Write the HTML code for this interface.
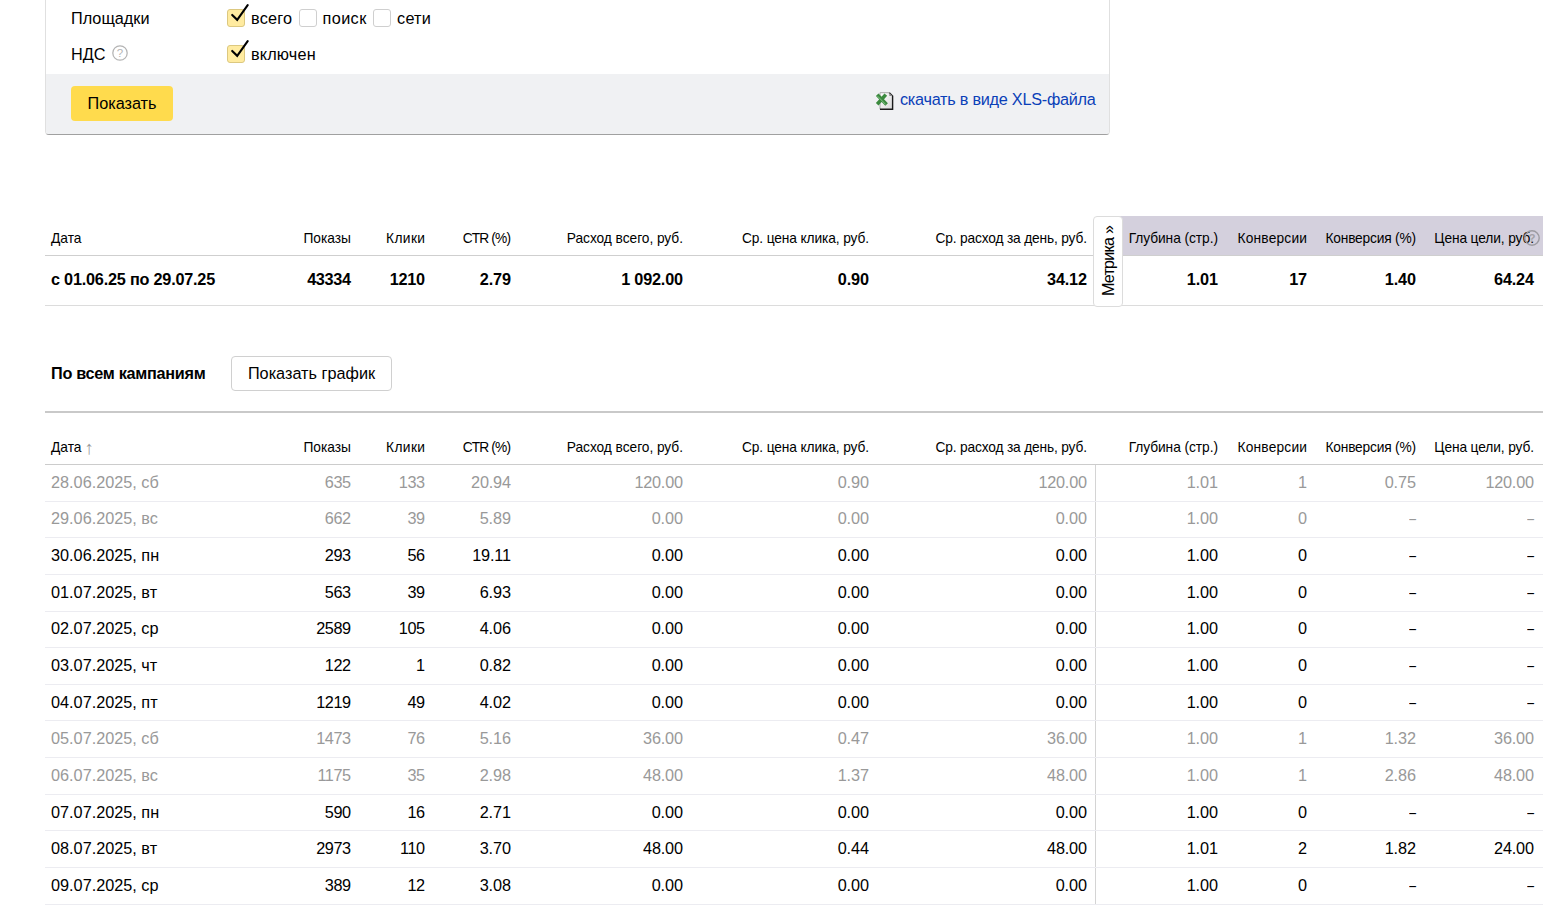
<!DOCTYPE html>
<html lang="ru"><head><meta charset="utf-8"><title>Статистика</title>
<style>
*{box-sizing:border-box;margin:0;padding:0}
html,body{width:1568px;height:905px;overflow:hidden;background:#fff}
body{font-family:"Liberation Sans",sans-serif;color:#000;position:relative;font-size:16.25px}
.abs{position:absolute}
.panel{position:absolute;left:45px;top:-10px;width:1065px;height:145px;background:#fff;border:1px solid #e0e0e0;border-bottom-color:#a0a0a0;border-radius:0 0 4px 4px}
.pfoot{position:absolute;left:0;right:0;top:83px;bottom:0;background:#f0f1f3;border-radius:0 0 3px 3px}
.lbl{position:absolute;white-space:nowrap;font-size:16.25px;line-height:20px}
.cb{position:absolute;width:18px;height:18px;border-radius:3px;border:1px solid #cfcfcf;background:#fff}
.cb.on{background:#ffeba0;border-color:#dcc880}
.btn{position:absolute;left:71px;top:86px;width:102px;height:35px;background:#ffdb4d;border-radius:4px;text-align:center;line-height:35px;font-size:16.25px}
.btn2{position:absolute;left:231px;top:356px;width:161px;height:35px;background:#fff;border:1px solid #d0d0d0;border-radius:4px;text-align:center;line-height:33px;font-size:16.25px}
.link{position:absolute;color:#0a40b8;white-space:nowrap;font-size:16.25px;line-height:20px}
.row{position:absolute;left:45px;width:1498px}
.c{position:absolute;white-space:nowrap;top:0}
.h{font-size:13.75px;line-height:18px}
.b{font-size:16.25px;line-height:20px}

.bold{font-weight:bold}
.d{display:inline-block;transform:scaleX(.75);transform-origin:100% 50%}
.gray{color:#999}
.hl{position:absolute;left:45px;width:1498px;height:1px}
.q{position:absolute;width:16px;height:16px;border:1px solid #b0b0b0;border-radius:50%;color:#b0b0b0;font-size:12px;line-height:14px;text-align:center}
</style></head><body>

<div class="panel"><div class="pfoot"></div></div>
<div class="lbl" style="left:71px;top:8px">Площадки</div>
<div class="lbl" style="left:71px;top:44px">НДС</div>
<svg class="abs" style="left:111px;top:44px" width="18" height="18" viewBox="0 0 18 18"><circle cx="9" cy="9" r="7.2" fill="none" stroke="#b4b4b4" stroke-width="1.25"/><text x="9" y="13.2" text-anchor="middle" font-family="Liberation Sans, sans-serif" font-size="11.5" fill="#b4b4b4">?</text></svg>
<div class="cb on" style="left:227px;top:9px"></div><svg class="abs" style="left:227px;top:3px" width="24" height="24" viewBox="0 0 24 24"><path d="M5.2 11.9 L10.2 16.8 L20.7 2.2" fill="none" stroke="#000" stroke-width="2.1" stroke-linecap="round" stroke-linejoin="miter"/></svg>
<div class="lbl" style="left:251px;top:8px;letter-spacing:0.2px">всего</div>
<div class="cb" style="left:299px;top:9px"></div>
<div class="lbl" style="left:322.5px;top:8px;letter-spacing:0.4px">поиск</div>
<div class="cb" style="left:373px;top:9px"></div>
<div class="lbl" style="left:397px;top:8px;letter-spacing:0.25px">сети</div>
<div class="cb on" style="left:227px;top:45px"></div><svg class="abs" style="left:227px;top:39px" width="24" height="24" viewBox="0 0 24 24"><path d="M5.2 11.9 L10.2 16.8 L20.7 2.2" fill="none" stroke="#000" stroke-width="2.1" stroke-linecap="round" stroke-linejoin="miter"/></svg>
<div class="lbl" style="left:251px;top:44px;letter-spacing:0.15px">включен</div>
<div class="btn">Показать</div>
<svg class="abs" style="left:875px;top:91px" width="20" height="20" viewBox="0 0 20 20">
<defs><linearGradient id="pg" x1="0" y1="0" x2="1" y2="1"><stop offset="0" stop-color="#ffffff"/><stop offset="1" stop-color="#d8d8d8"/></linearGradient></defs>
<path d="M5 1.7H14.3L17.6 5V18.2H5Z" fill="url(#pg)"/>
<path d="M5 18.2V1.7H14.3" fill="none" stroke="#a8a8a8" stroke-width="1"/>
<path d="M14.3 1.7L17.6 5V18.2H5" fill="none" stroke="#1a1a1a" stroke-width="1.4" stroke-linejoin="miter"/>
<path d="M14.3 1.7V5H17.6Z" fill="#8a8a8a"/>
<path d="M2.2 3.8L11.6 13.6M10.8 3.6L2.2 13.2" stroke="#3b8a3e" stroke-width="3.6" stroke-linecap="butt"/>
<path d="M2.6 5.2L10.6 13.4" stroke="#8cc98e" stroke-width="0.9"/>
</svg>
<div class="link" style="left:900px;top:89px;letter-spacing:-0.26px">скачать в виде XLS-файла</div>
<div class="abs" style="left:1113px;top:216px;width:430px;height:39px;background:#d4d0dd"></div>
<div class="hl" style="top:255px;background:#cfcfcf"></div>
<div class="hl" style="top:305px;background:#dcdcdc"></div>
<div class="row" style="top:230px;left:0;width:1568px"><span class="c h" style="left:51px">Дата</span><span class="c h" style="right:1217px">Показы</span><span class="c h" style="right:1143px;letter-spacing:0.4px;margin-right:-0.4px">Клики</span><span class="c h" style="right:1057px;letter-spacing:-0.85px;margin-right:0.85px">CTR (%)</span><span class="c h" style="right:885px;letter-spacing:-0.05px;margin-right:0.05px">Расход всего, руб.</span><span class="c h" style="right:699px;letter-spacing:-0.12px;margin-right:0.12px">Ср. цена клика, руб.</span><span class="c h" style="right:481px;letter-spacing:-0.17px;margin-right:0.17px">Ср. расход за день, руб.</span><span class="c h" style="right:350px;letter-spacing:-0.06px;margin-right:0.06px">Глубина (стр.)</span><span class="c h" style="right:261px;letter-spacing:0.2px;margin-right:-0.2px">Конверсии</span><span class="c h" style="right:152px;letter-spacing:-0.2px;margin-right:0.2px">Конверсия (%)</span><span class="c h" style="right:34px;letter-spacing:-0.12px;margin-right:0.12px">Цена цели, руб.</span></div>
<div class="row" style="top:269px;left:0;width:1568px"><span class="c b bold" style="left:51px;letter-spacing:-0.22px">с 01.06.25 по 29.07.25</span><span class="c b n bold" style="right:1217px;letter-spacing:-0.33px;margin-right:0.33px">43334</span><span class="c b n bold" style="right:1143px;letter-spacing:-0.33px;margin-right:0.33px">1210</span><span class="c b n bold" style="right:1057px;letter-spacing:-0.15px;margin-right:0.15px">2.79</span><span class="c b n bold" style="right:885px;letter-spacing:-0.20px;margin-right:0.20px">1 092.00</span><span class="c b n bold" style="right:699px;letter-spacing:-0.15px;margin-right:0.15px">0.90</span><span class="c b n bold" style="right:481px;letter-spacing:-0.18px;margin-right:0.18px">34.12</span><span class="c b n bold" style="right:350px;letter-spacing:-0.15px;margin-right:0.15px">1.01</span><span class="c b n bold" style="right:261px;letter-spacing:-0.33px;margin-right:0.33px">17</span><span class="c b n bold" style="right:152px;letter-spacing:-0.15px;margin-right:0.15px">1.40</span><span class="c b n bold" style="right:34px;letter-spacing:-0.18px;margin-right:0.18px">64.24</span></div>
<svg class="abs" style="left:1523.2px;top:229px" width="18" height="18" viewBox="0 0 18 18"><circle cx="9" cy="9" r="7.2" fill="none" stroke="#9c9ba1" stroke-width="1.4"/><text x="9" y="13.2" text-anchor="middle" font-family="Liberation Sans, sans-serif" font-size="11.5" font-weight="bold" fill="#a3a2a8">?</text></svg>
<div class="abs" style="left:1093px;top:216px;width:30px;height:91px;background:#fff;border:1px solid #dcdcdc;border-radius:4px"></div>
<div class="abs" style="left:1108px;top:261px;width:0;height:0"><div class="abs" style="white-space:nowrap;font-size:16.25px;line-height:20px;transform:translate(-50%,-50%) rotate(-90deg);transform-origin:50% 50%;left:0;top:0;letter-spacing:-0.85px">Метрика&nbsp;»</div></div>
<div class="lbl bold" style="left:51px;top:363px;letter-spacing:-0.3px">По всем кампаниям</div>
<div class="btn2">Показать график</div>
<div class="hl" style="top:411px;height:2px;background:#c9c9c9"></div>
<div class="row" style="top:439px;left:0;width:1568px"><span class="c h" style="left:51px">Дата<span style="color:#999;font-size:18.5px;line-height:0;position:relative;top:1.5px;margin-left:3px">↑</span></span><span class="c h" style="right:1217px">Показы</span><span class="c h" style="right:1143px;letter-spacing:0.4px;margin-right:-0.4px">Клики</span><span class="c h" style="right:1057px;letter-spacing:-0.85px;margin-right:0.85px">CTR (%)</span><span class="c h" style="right:885px;letter-spacing:-0.05px;margin-right:0.05px">Расход всего, руб.</span><span class="c h" style="right:699px;letter-spacing:-0.12px;margin-right:0.12px">Ср. цена клика, руб.</span><span class="c h" style="right:481px;letter-spacing:-0.17px;margin-right:0.17px">Ср. расход за день, руб.</span><span class="c h" style="right:350px;letter-spacing:-0.06px;margin-right:0.06px">Глубина (стр.)</span><span class="c h" style="right:261px;letter-spacing:0.2px;margin-right:-0.2px">Конверсии</span><span class="c h" style="right:152px;letter-spacing:-0.2px;margin-right:0.2px">Конверсия (%)</span><span class="c h" style="right:34px;letter-spacing:-0.12px;margin-right:0.12px">Цена цели, руб.</span></div>
<div class="hl" style="top:464px;background:#cccccc"></div>
<div class="abs" style="left:1095px;top:465px;width:1px;height:440px;background:#d4d4d4"></div>
<div class="row" style="top:471.70px;left:0;width:1568px"><span class="c b gray" style="left:51px">28.06.2025, сб</span><span class="c b n gray" style="right:1217px;letter-spacing:-0.47px;margin-right:0.47px">635</span><span class="c b n gray" style="right:1143px;letter-spacing:-0.47px;margin-right:0.47px">133</span><span class="c b n gray" style="right:1057px;letter-spacing:-0.18px;margin-right:0.18px">20.94</span><span class="c b n gray" style="right:885px;letter-spacing:-0.22px;margin-right:0.22px">120.00</span><span class="c b n gray" style="right:699px;letter-spacing:-0.10px;margin-right:0.10px">0.90</span><span class="c b n gray" style="right:481px;letter-spacing:-0.22px;margin-right:0.22px">120.00</span><span class="c b n gray" style="right:350px;letter-spacing:-0.10px;margin-right:0.10px">1.01</span><span class="c b n gray" style="right:261px;letter-spacing:-0.47px;margin-right:0.47px">1</span><span class="c b n gray" style="right:152px;letter-spacing:-0.10px;margin-right:0.10px">0.75</span><span class="c b n gray" style="right:34px;letter-spacing:-0.22px;margin-right:0.22px">120.00</span></div>
<div class="hl" style="top:501px;background:#ececf1"></div>
<div class="row" style="top:508.37px;left:0;width:1568px"><span class="c b gray" style="left:51px">29.06.2025, вс</span><span class="c b n gray" style="right:1217px;letter-spacing:-0.47px;margin-right:0.47px">662</span><span class="c b n gray" style="right:1143px;letter-spacing:-0.47px;margin-right:0.47px">39</span><span class="c b n gray" style="right:1057px;letter-spacing:-0.10px;margin-right:0.10px">5.89</span><span class="c b n gray" style="right:885px;letter-spacing:-0.10px;margin-right:0.10px">0.00</span><span class="c b n gray" style="right:699px;letter-spacing:-0.10px;margin-right:0.10px">0.00</span><span class="c b n gray" style="right:481px;letter-spacing:-0.10px;margin-right:0.10px">0.00</span><span class="c b n gray" style="right:350px;letter-spacing:-0.10px;margin-right:0.10px">1.00</span><span class="c b n gray" style="right:261px;letter-spacing:-0.47px;margin-right:0.47px">0</span><span class="c b n gray" style="right:152px"><span class="d">–</span></span><span class="c b n gray" style="right:34px"><span class="d">–</span></span></div>
<div class="hl" style="top:537px;background:#ececf1"></div>
<div class="row" style="top:545.04px;left:0;width:1568px"><span class="c b" style="left:51px">30.06.2025, пн</span><span class="c b n" style="right:1217px;letter-spacing:-0.47px;margin-right:0.47px">293</span><span class="c b n" style="right:1143px;letter-spacing:-0.47px;margin-right:0.47px">56</span><span class="c b n" style="right:1057px;letter-spacing:-0.18px;margin-right:0.18px">19.11</span><span class="c b n" style="right:885px;letter-spacing:-0.10px;margin-right:0.10px">0.00</span><span class="c b n" style="right:699px;letter-spacing:-0.10px;margin-right:0.10px">0.00</span><span class="c b n" style="right:481px;letter-spacing:-0.10px;margin-right:0.10px">0.00</span><span class="c b n" style="right:350px;letter-spacing:-0.10px;margin-right:0.10px">1.00</span><span class="c b n" style="right:261px;letter-spacing:-0.47px;margin-right:0.47px">0</span><span class="c b n" style="right:152px"><span class="d">–</span></span><span class="c b n" style="right:34px"><span class="d">–</span></span></div>
<div class="hl" style="top:574px;background:#ececf1"></div>
<div class="row" style="top:581.71px;left:0;width:1568px"><span class="c b" style="left:51px">01.07.2025, вт</span><span class="c b n" style="right:1217px;letter-spacing:-0.47px;margin-right:0.47px">563</span><span class="c b n" style="right:1143px;letter-spacing:-0.47px;margin-right:0.47px">39</span><span class="c b n" style="right:1057px;letter-spacing:-0.10px;margin-right:0.10px">6.93</span><span class="c b n" style="right:885px;letter-spacing:-0.10px;margin-right:0.10px">0.00</span><span class="c b n" style="right:699px;letter-spacing:-0.10px;margin-right:0.10px">0.00</span><span class="c b n" style="right:481px;letter-spacing:-0.10px;margin-right:0.10px">0.00</span><span class="c b n" style="right:350px;letter-spacing:-0.10px;margin-right:0.10px">1.00</span><span class="c b n" style="right:261px;letter-spacing:-0.47px;margin-right:0.47px">0</span><span class="c b n" style="right:152px"><span class="d">–</span></span><span class="c b n" style="right:34px"><span class="d">–</span></span></div>
<div class="hl" style="top:611px;background:#ececf1"></div>
<div class="row" style="top:618.38px;left:0;width:1568px"><span class="c b" style="left:51px">02.07.2025, ср</span><span class="c b n" style="right:1217px;letter-spacing:-0.47px;margin-right:0.47px">2589</span><span class="c b n" style="right:1143px;letter-spacing:-0.47px;margin-right:0.47px">105</span><span class="c b n" style="right:1057px;letter-spacing:-0.10px;margin-right:0.10px">4.06</span><span class="c b n" style="right:885px;letter-spacing:-0.10px;margin-right:0.10px">0.00</span><span class="c b n" style="right:699px;letter-spacing:-0.10px;margin-right:0.10px">0.00</span><span class="c b n" style="right:481px;letter-spacing:-0.10px;margin-right:0.10px">0.00</span><span class="c b n" style="right:350px;letter-spacing:-0.10px;margin-right:0.10px">1.00</span><span class="c b n" style="right:261px;letter-spacing:-0.47px;margin-right:0.47px">0</span><span class="c b n" style="right:152px"><span class="d">–</span></span><span class="c b n" style="right:34px"><span class="d">–</span></span></div>
<div class="hl" style="top:647px;background:#ececf1"></div>
<div class="row" style="top:655.05px;left:0;width:1568px"><span class="c b" style="left:51px">03.07.2025, чт</span><span class="c b n" style="right:1217px;letter-spacing:-0.47px;margin-right:0.47px">122</span><span class="c b n" style="right:1143px;letter-spacing:-0.47px;margin-right:0.47px">1</span><span class="c b n" style="right:1057px;letter-spacing:-0.10px;margin-right:0.10px">0.82</span><span class="c b n" style="right:885px;letter-spacing:-0.10px;margin-right:0.10px">0.00</span><span class="c b n" style="right:699px;letter-spacing:-0.10px;margin-right:0.10px">0.00</span><span class="c b n" style="right:481px;letter-spacing:-0.10px;margin-right:0.10px">0.00</span><span class="c b n" style="right:350px;letter-spacing:-0.10px;margin-right:0.10px">1.00</span><span class="c b n" style="right:261px;letter-spacing:-0.47px;margin-right:0.47px">0</span><span class="c b n" style="right:152px"><span class="d">–</span></span><span class="c b n" style="right:34px"><span class="d">–</span></span></div>
<div class="hl" style="top:684px;background:#ececf1"></div>
<div class="row" style="top:691.72px;left:0;width:1568px"><span class="c b" style="left:51px">04.07.2025, пт</span><span class="c b n" style="right:1217px;letter-spacing:-0.47px;margin-right:0.47px">1219</span><span class="c b n" style="right:1143px;letter-spacing:-0.47px;margin-right:0.47px">49</span><span class="c b n" style="right:1057px;letter-spacing:-0.10px;margin-right:0.10px">4.02</span><span class="c b n" style="right:885px;letter-spacing:-0.10px;margin-right:0.10px">0.00</span><span class="c b n" style="right:699px;letter-spacing:-0.10px;margin-right:0.10px">0.00</span><span class="c b n" style="right:481px;letter-spacing:-0.10px;margin-right:0.10px">0.00</span><span class="c b n" style="right:350px;letter-spacing:-0.10px;margin-right:0.10px">1.00</span><span class="c b n" style="right:261px;letter-spacing:-0.47px;margin-right:0.47px">0</span><span class="c b n" style="right:152px"><span class="d">–</span></span><span class="c b n" style="right:34px"><span class="d">–</span></span></div>
<div class="hl" style="top:720px;background:#ececf1"></div>
<div class="row" style="top:728.39px;left:0;width:1568px"><span class="c b gray" style="left:51px">05.07.2025, сб</span><span class="c b n gray" style="right:1217px;letter-spacing:-0.47px;margin-right:0.47px">1473</span><span class="c b n gray" style="right:1143px;letter-spacing:-0.47px;margin-right:0.47px">76</span><span class="c b n gray" style="right:1057px;letter-spacing:-0.10px;margin-right:0.10px">5.16</span><span class="c b n gray" style="right:885px;letter-spacing:-0.18px;margin-right:0.18px">36.00</span><span class="c b n gray" style="right:699px;letter-spacing:-0.10px;margin-right:0.10px">0.47</span><span class="c b n gray" style="right:481px;letter-spacing:-0.18px;margin-right:0.18px">36.00</span><span class="c b n gray" style="right:350px;letter-spacing:-0.10px;margin-right:0.10px">1.00</span><span class="c b n gray" style="right:261px;letter-spacing:-0.47px;margin-right:0.47px">1</span><span class="c b n gray" style="right:152px;letter-spacing:-0.10px;margin-right:0.10px">1.32</span><span class="c b n gray" style="right:34px;letter-spacing:-0.18px;margin-right:0.18px">36.00</span></div>
<div class="hl" style="top:757px;background:#ececf1"></div>
<div class="row" style="top:765.06px;left:0;width:1568px"><span class="c b gray" style="left:51px">06.07.2025, вс</span><span class="c b n gray" style="right:1217px;letter-spacing:-0.47px;margin-right:0.47px">1175</span><span class="c b n gray" style="right:1143px;letter-spacing:-0.47px;margin-right:0.47px">35</span><span class="c b n gray" style="right:1057px;letter-spacing:-0.10px;margin-right:0.10px">2.98</span><span class="c b n gray" style="right:885px;letter-spacing:-0.18px;margin-right:0.18px">48.00</span><span class="c b n gray" style="right:699px;letter-spacing:-0.10px;margin-right:0.10px">1.37</span><span class="c b n gray" style="right:481px;letter-spacing:-0.18px;margin-right:0.18px">48.00</span><span class="c b n gray" style="right:350px;letter-spacing:-0.10px;margin-right:0.10px">1.00</span><span class="c b n gray" style="right:261px;letter-spacing:-0.47px;margin-right:0.47px">1</span><span class="c b n gray" style="right:152px;letter-spacing:-0.10px;margin-right:0.10px">2.86</span><span class="c b n gray" style="right:34px;letter-spacing:-0.18px;margin-right:0.18px">48.00</span></div>
<div class="hl" style="top:794px;background:#ececf1"></div>
<div class="row" style="top:801.73px;left:0;width:1568px"><span class="c b" style="left:51px">07.07.2025, пн</span><span class="c b n" style="right:1217px;letter-spacing:-0.47px;margin-right:0.47px">590</span><span class="c b n" style="right:1143px;letter-spacing:-0.47px;margin-right:0.47px">16</span><span class="c b n" style="right:1057px;letter-spacing:-0.10px;margin-right:0.10px">2.71</span><span class="c b n" style="right:885px;letter-spacing:-0.10px;margin-right:0.10px">0.00</span><span class="c b n" style="right:699px;letter-spacing:-0.10px;margin-right:0.10px">0.00</span><span class="c b n" style="right:481px;letter-spacing:-0.10px;margin-right:0.10px">0.00</span><span class="c b n" style="right:350px;letter-spacing:-0.10px;margin-right:0.10px">1.00</span><span class="c b n" style="right:261px;letter-spacing:-0.47px;margin-right:0.47px">0</span><span class="c b n" style="right:152px"><span class="d">–</span></span><span class="c b n" style="right:34px"><span class="d">–</span></span></div>
<div class="hl" style="top:830px;background:#ececf1"></div>
<div class="row" style="top:838.40px;left:0;width:1568px"><span class="c b" style="left:51px">08.07.2025, вт</span><span class="c b n" style="right:1217px;letter-spacing:-0.47px;margin-right:0.47px">2973</span><span class="c b n" style="right:1143px;letter-spacing:-0.47px;margin-right:0.47px">110</span><span class="c b n" style="right:1057px;letter-spacing:-0.10px;margin-right:0.10px">3.70</span><span class="c b n" style="right:885px;letter-spacing:-0.18px;margin-right:0.18px">48.00</span><span class="c b n" style="right:699px;letter-spacing:-0.10px;margin-right:0.10px">0.44</span><span class="c b n" style="right:481px;letter-spacing:-0.18px;margin-right:0.18px">48.00</span><span class="c b n" style="right:350px;letter-spacing:-0.10px;margin-right:0.10px">1.01</span><span class="c b n" style="right:261px;letter-spacing:-0.47px;margin-right:0.47px">2</span><span class="c b n" style="right:152px;letter-spacing:-0.10px;margin-right:0.10px">1.82</span><span class="c b n" style="right:34px;letter-spacing:-0.18px;margin-right:0.18px">24.00</span></div>
<div class="hl" style="top:867px;background:#ececf1"></div>
<div class="row" style="top:875.07px;left:0;width:1568px"><span class="c b" style="left:51px">09.07.2025, ср</span><span class="c b n" style="right:1217px;letter-spacing:-0.47px;margin-right:0.47px">389</span><span class="c b n" style="right:1143px;letter-spacing:-0.47px;margin-right:0.47px">12</span><span class="c b n" style="right:1057px;letter-spacing:-0.10px;margin-right:0.10px">3.08</span><span class="c b n" style="right:885px;letter-spacing:-0.10px;margin-right:0.10px">0.00</span><span class="c b n" style="right:699px;letter-spacing:-0.10px;margin-right:0.10px">0.00</span><span class="c b n" style="right:481px;letter-spacing:-0.10px;margin-right:0.10px">0.00</span><span class="c b n" style="right:350px;letter-spacing:-0.10px;margin-right:0.10px">1.00</span><span class="c b n" style="right:261px;letter-spacing:-0.47px;margin-right:0.47px">0</span><span class="c b n" style="right:152px"><span class="d">–</span></span><span class="c b n" style="right:34px"><span class="d">–</span></span></div>
<div class="hl" style="top:904px;background:#ececf1"></div>
</body></html>
